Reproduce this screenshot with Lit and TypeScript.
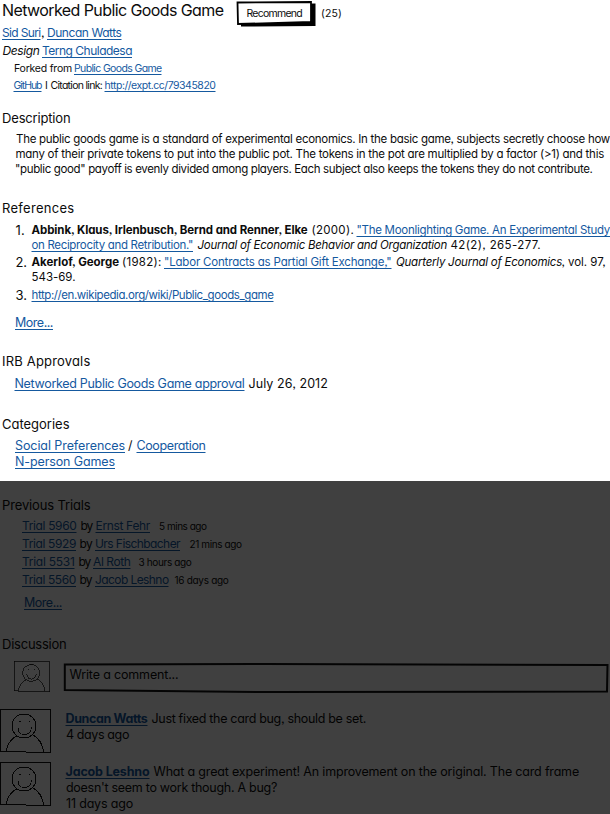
import { LitElement, html, css, svg } from "lit";
import { customElement, property } from "lit/decorators.js";

type Run = [start: number, end: number, text: string, kind?: string];

/** A piece of text whose tracking is set so that it fills its measure. */
@customElement("text-run")
class TextRun extends LitElement {
  @property({ type: Number }) measure = 0;
  @property() text = "";
  @property() kind = "";

  static styles = css`
    :host { display: block; flex: none; white-space: pre; line-height: 12px; font-feature-settings: "cv11", "ss03"; }
    .link { color: #15599f; text-decoration: underline; text-decoration-thickness: 1px; text-underline-offset: 2px; text-decoration-skip-ink: none; }
    .italic { font-style: italic; }
    .bold { font-weight: 700; }
    .number { display: inline-block; transform: translateY(1px); font-size: 13px; }
    .small { font-size: 10px; }
  `;

  updated() {
    const span = this.renderRoot.querySelector("span")!;
    span.style.letterSpacing = "0px";
    const natural = span.getBoundingClientRect().width;
    span.style.letterSpacing = `${(this.measure - natural) / this.text.length}px`;
  }

  render() {
    return html`<span class=${this.kind}>${this.text}</span>`;
  }
}

const TRIALS: Run[][] = [
  [[22, 76.5, "Trial 5960", "link"], [80.5, 92, "by"], [95.5, 150, "Ernst Fehr", "link"], [159, 206.5, "5 mins ago", "small"]],
  [[22, 76, "Trial 5929", "link"], [79.5, 92, "by"], [95, 180, "Urs Fischbacher", "link"], [189.5, 241.5, "21 mins ago", "small"]],
  [[22, 74.5, "Trial 5531", "link"], [78.5, 90, "by"], [93, 130.5, "Al Roth", "link"], [138.5, 191.5, "3 hours ago", "small"]],
  [[22, 76, "Trial 5560", "link"], [79.5, 91.5, "by"], [95, 168.5, "Jacob Leshno", "link"], [174.5, 228.5, "16 days ago", "small"]],
];

@customElement("app-root")
class AppRoot extends LitElement {
  static styles = css`
    :host { display: block; width: 610px; height: 814px; overflow: hidden; background: #fff; color: #0c0c0c; font-family: Inter, "Noto Sans", sans-serif; font-size: 12px; }
    .page { display: flex; flex-direction: column; }
    section, header { display: grid; }
    header { padding-top: 4px; grid-template-rows: 21px 18px 17px 17px 34px; }
    .description { grid-template-rows: 20px 15px 15px 40px; }
    .references { grid-template-rows: 21px 15px 17px 15px 18px 28px 39px; }
    .irb { grid-template-rows: 22px 41px; }
    .categories { grid-template-rows: 21px 16px 27px; }
    .dimmed { position: relative; height: 333px; overflow: hidden; }
    .dimmed::after { content: ""; position: absolute; inset: 0; background: rgba(0, 0, 0, 0.75); }
    .trials { padding-top: 17px; grid-template-rows: 20px 18px 18px 18px 23px 42px; }
    .discussion { grid-template-rows: 24px 48px 53px 53px; }
    .row { display: flex; align-items: baseline; min-width: 0; }
    .row::before { content: ""; flex: none; width: 0; height: 12px; }
    .title { font-size: 16px; }
    .aside { font-size: 10.5px; }
    .fine { font-size: 10.5px; }
    .body { font-size: 11.5px; }
    .roomy { font-size: 12.5px; }
    .heading { font-size: 13px; }
    .head { display: flex; }
    .button { display: grid; width: 80px; height: 28px; margin: -4px 0 0 12px; flex: none; }
    .button > * { grid-area: 1 / 1; }
    .label { padding-top: 5px; }
    .count { padding-top: 1px; }
    .composer { display: flex; padding-left: 14px; }
    .field { display: grid; margin-left: 13px; }
    .field > * { grid-area: 1 / 1; }
    .placeholder { padding-top: 6px; }
    .comment { display: flex; }
    .message { display: grid; grid-template-rows: 16px 16px 16px; padding-top: 2px; margin-left: 13px; }
    svg { display: block; flex: none; overflow: visible; }
    .pen { fill: none; stroke: #111; }
  `;

  row(runs: Run[], cls = "", origin = 0) {
    let x = origin;
    return html`<div class="row ${cls}">${runs.map(([a, b, text, kind]) => {
      const gap = a - x;
      x = b;
      return html`<text-run style="margin-left:${gap}px;width:${b - a}px" .measure=${b - a} .text=${text} .kind=${kind ?? ""}></text-run>`;
    })}</div>`;
  }

  avatar(w: number, h: number) {
    return html`<svg width=${w} height=${h} viewBox="0 0 52 44" preserveAspectRatio="none" shape-rendering="crispEdges">
      ${svg`<g class="pen">
        <path d="M.5 .5L50.5 1V43.5L.5 42.5Z"/>
        <circle cx="24" cy="17" r="12"/>
        <path d="M19 12.500h1.500M28.500 12.500h1.500M18 19C18.500 28 30.500 28 31.500 18.500M23 5.500h3"/>
        <path d="M6 43C7 36 11 30 16.500 27M33 26C39 29 43 36 43.500 43"/>
      </g>`}
    </svg>`;
  }

  render() {
    return html`<div class="page">
      <header>
        <div class="head">
          ${this.row([[2, 223.5, "Networked Public Goods Game"]], "title")}
          <div class="button">
            <svg width="80" height="28" viewBox="0 0 80 28">
              <path d="M5 4L79.500 3.500V26L5 26.500Z" fill="#000"/>
              <path d="M1.500 2.500L75 2V22L2 24Z" fill="#fff" stroke="#000" stroke-width="1.800"/>
            </svg>
            ${this.row([[246.5, 302, "Recommend"]], "aside label", 235.5)}
          </div>
          ${this.row([[321, 342, "(25)"]], "aside count", 315.5)}
        </div>
        ${this.row([[2, 40.5, "Sid Suri", "link"], [41, 44, ","], [47, 121.5, "Duncan Watts", "link"]])}
        ${this.row([[2.5, 39.5, "Design", "italic"], [42, 132, "Terng Chuladesa", "link"]])}
        ${this.row([[14, 72, "Forked from"], [74, 161.5, "Public Goods Game", "link"]], "fine")}
        ${this.row([[13.5, 41.5, "GitHub", "link"], [45, 48, "I"], [50.5, 102, "Citation link:"], [104.5, 215.5, "http://expt.cc/79345820", "link"]], "fine")}
      </header>
      <section class="description">
        ${this.row([[2, 70.5, "Description"]], "heading")}
        ${this.row([[16, 610, "The public goods game is a standard of experimental economics. In the basic game, subjects secretly choose how"]], "body")}
        ${this.row([[15.5, 604, "many of their private tokens to put into the public pot. The tokens in the pot are multiplied by a factor (>1) and this"]], "body")}
        ${this.row([[15, 592.5, "\"public good\" payoff is evenly divided among players. Each subject also keeps the tokens they do not contribute."]], "body")}
      </section>
      <section class="references">
        ${this.row([[2, 74.5, "References"]], "heading")}
        ${this.row([[15.5, 25, "1.", "number"], [31.5, 307.5, "Abbink, Klaus, Irlenbusch, Bernd and Renner, Elke", "bold"], [311.5, 354, "(2000)."], [356.5, 610, "\"The Moonlighting Game. An Experimental Study", "link"]], "body")}
        ${this.row([[31.5, 193, "on Reciprocity and Retribution.\"", "link"], [197.5, 447, "Journal of Economic Behavior and Organization", "italic"], [450.5, 541, "42(2), 265-277."]], "body")}
        ${this.row([[15.5, 27, "2.", "number"], [31.5, 119, "Akerlof, George", "bold"], [122, 161.5, "(1982):"], [164, 391.5, "\"Labor Contracts as Partial Gift Exchange,\"", "link"], [396, 562, "Quarterly Journal of Economics", "italic"], [561.5, 605.5, ", vol. 97,"]], "body")}
        ${this.row([[31.5, 75.5, "543-69."]], "body")}
        ${this.row([[15.5, 27, "3.", "number"], [31.5, 273.5, "http://en.wikipedia.org/wiki/Public_goods_game", "link"]], "body")}
        ${this.row([[15, 53, "More...", "link"]], "roomy")}
      </section>
      <section class="irb">
        ${this.row([[2, 90.5, "IRB Approvals"]], "heading")}
        ${this.row([[14.5, 244.5, "Networked Public Goods Game approval", "link"], [248.5, 328, "July 26, 2012"]], "roomy")}
      </section>
      <section class="categories">
        ${this.row([[2, 69.5, "Categories"]], "heading")}
        ${this.row([[15, 125, "Social Preferences", "link"], [128, 133.5, "/"], [136.5, 205.5, "Cooperation", "link"]], "roomy")}
        ${this.row([[15, 115, "N-person Games", "link"]], "roomy")}
      </section>
      <div class="dimmed">
        <section class="trials">
          ${this.row([[2, 90.5, "Previous Trials"]], "heading")}
          ${TRIALS.map((t) => this.row(t))}
          ${this.row([[24, 62, "More...", "link"]], "roomy")}
        </section>
        <section class="discussion">
          ${this.row([[2, 66.5, "Discussion"]], "heading")}
          <div class="composer">
            ${this.avatar(37, 31)}
            <div class="field">
              <svg width="545" height="31" viewBox="0 0 545 31">
                <path class="pen" d="M.8 3.500L200 3L543.500 4L543 30.500L200 31L.8 29Z" stroke-width="2"/>
              </svg>
              ${this.row([[69.5, 178.5, "Write a comment..."]], "placeholder roomy", 64)}
            </div>
          </div>
          <div class="comment">
            ${this.avatar(52, 44)}
            <div class="message">
              ${this.row([[65.5, 147.5, "Duncan Watts", "link bold"], [151.5, 366, "Just fixed the card bug, should be set."]], "roomy", 65)}
              ${this.row([[66, 129, "4 days ago"]], "roomy", 65)}
            </div>
          </div>
          <div class="comment">
            ${this.avatar(52, 44)}
            <div class="message">
              ${this.row([[65.5, 149.5, "Jacob Leshno", "link bold"], [153.5, 579, "What a great experiment! An improvement on the original. The card frame"]], "roomy", 65)}
              ${this.row([[66, 277, "doesn't seem to work though. A bug?"]], "roomy", 65)}
              ${this.row([[66, 133, "11 days ago"]], "roomy", 65)}
            </div>
          </div>
        </section>
      </div>
    </div>`;
  }
}
